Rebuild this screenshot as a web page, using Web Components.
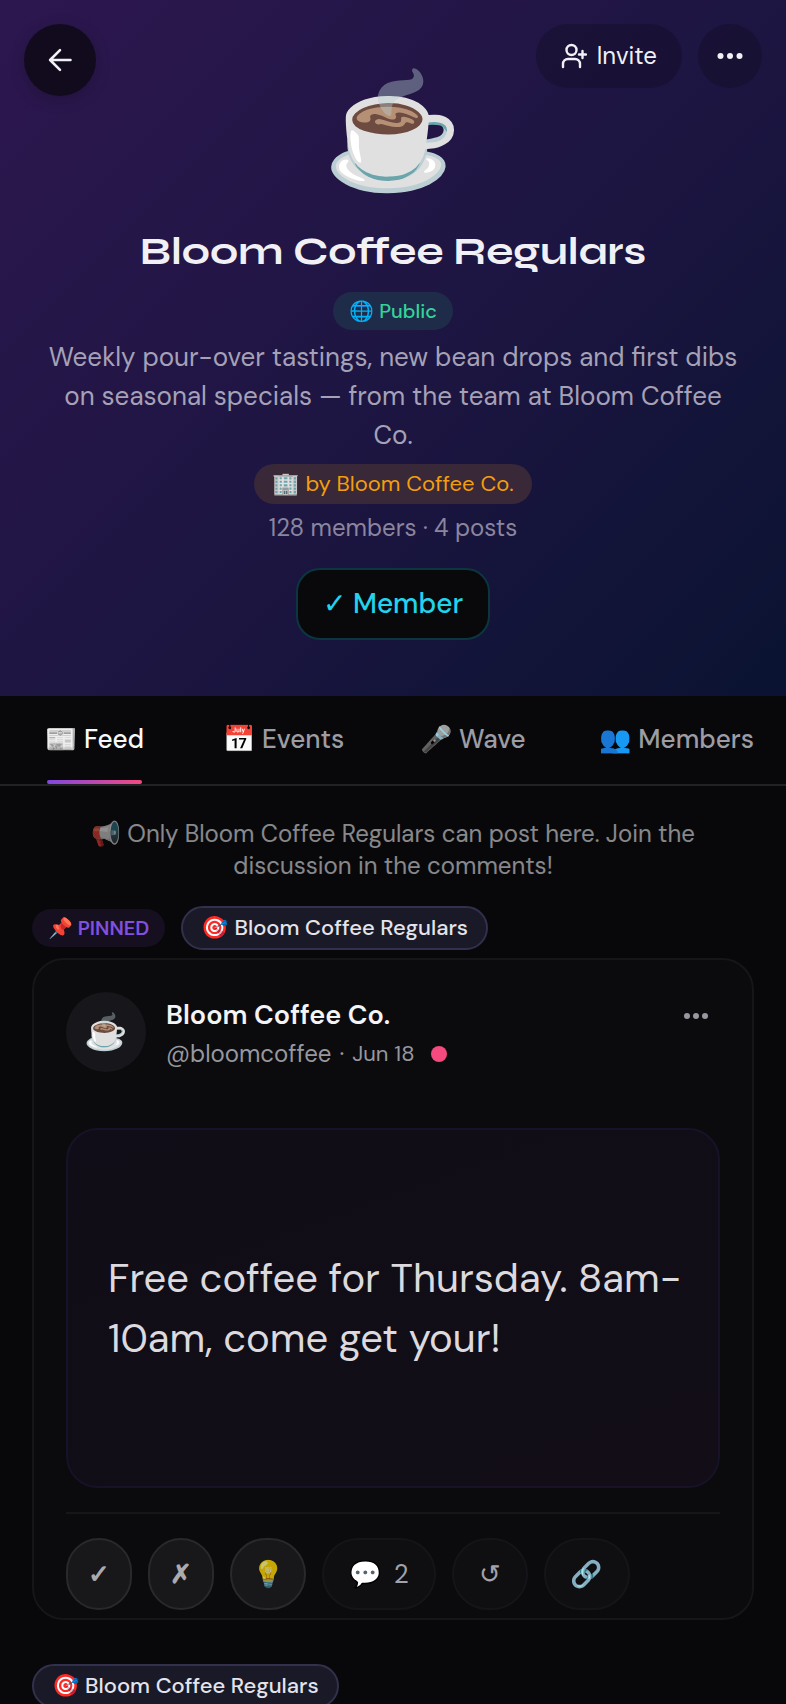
<!DOCTYPE html>
<html lang="en">
<head>
<meta charset="utf-8">
<meta name="viewport" content="width=device-width, initial-scale=1">
<title>Bloom Coffee Regulars</title>
<style>
  html { background: #08080a; scrollbar-width: none; }
  body {
    margin: 0;
    color: #f1f1f5;
    font-family: "DM Sans", "Noto Sans", "Noto Color Emoji", sans-serif;
    font-size: 24px;
    line-height: 32px;
  }
</style>
</head>
<body>
<community-page></community-page>

<template id="t-page">
  <style>
    :host { display: block; }
    main { padding: 32px 32px 0; display: flex; flex-direction: column; }
    .notice { margin: 0 0 24px; padding: 0 32px; text-align: center; opacity: .55; }
    .labels { display: flex; align-items: center; gap: 16px; margin-bottom: 8px; }
    feed-post { margin-bottom: 44px; }
  </style>
  <group-hero></group-hero>
  <tab-bar></tab-bar>
  <main>
    <p class="notice">📢 Only Bloom Coffee Regulars can post here. Join the discussion in the comments!</p>
    <div class="labels">
      <pill-label kind="pinned">📌 PINNED</pill-label>
      <pill-label kind="group">🎯 Bloom Coffee Regulars</pill-label>
    </div>
    <feed-post>
      <span slot="avatar">☕</span>
      <span slot="name">Bloom Coffee Co.</span>
      <span slot="handle">@bloomcoffee</span>
      <span slot="date">Jun 18</span>
      Free coffee for Thursday. 8am-<wbr>10am, come get your!
    </feed-post>
    <div class="labels">
      <pill-label kind="group">🎯 Bloom Coffee Regulars</pill-label>
    </div>
  </main>
</template>

<template id="t-hero">
  <style>
    :host {
      display: block;
      position: relative;
      background: linear-gradient(135deg, #2d174f 0%, #1c1541 55%, #0a1331 100%);
    }
    .bar {
      position: absolute; top: 24px; left: 24px; right: 24px;
      display: flex; align-items: flex-start; justify-content: space-between;
    }
    .right { display: flex; gap: 16px; }
    .content {
      display: flex; flex-direction: column; align-items: center;
      padding: 64px 48px 56px; text-align: center;
    }
    .emoji { font-size: 112px; line-height: 136px; }
    h1 {
      margin: 24px 0 14px;
      font: 700 40px/54px Syne, "DejaVu Sans", sans-serif;
    }
    .about { margin: 8px 0 9px; font-size: 26px; line-height: 39px; color: #a5a1b6; }
    .stats { margin: 8px 0 24px; color: #8a869f; }
  </style>
  <div class="bar">
    <round-button kind="back" label="Back">
      <svg width="28" height="28" viewBox="0 0 24 24" fill="none" stroke="currentColor" stroke-width="2.200" stroke-linecap="round" stroke-linejoin="round"><path d="M21 12H3.500M12 3.500L3.500 12l8.500 8.500"/></svg>
    </round-button>
    <div class="right">
      <round-button kind="text">
        <svg width="26" height="26" viewBox="0 0 26 26" fill="none" stroke="currentColor" stroke-width="2.400" stroke-linecap="round" stroke-linejoin="round"><circle cx="10.500" cy="7" r="5"/><path d="M2 24v-3a5 5 0 0 1 5-5h7a5 5 0 0 1 5 5v3M21.500 8v7M18 11.500h7"/></svg>
        Invite
      </round-button>
      <round-button label="More options">
        <svg width="28" height="28" viewBox="0 0 28 28" fill="currentColor"><circle cx="4.500" cy="14" r="3"/><circle cx="14" cy="14" r="3"/><circle cx="23.500" cy="14" r="3"/></svg>
      </round-button>
    </div>
  </div>
  <div class="content">
    <div class="emoji">☕</div>
    <h1>Bloom Coffee Regulars</h1>
    <pill-label kind="public">🌐 Public</pill-label>
    <p class="about">Weekly pour-over tastings, new bean drops and first dibs on seasonal specials — from the team at Bloom Coffee Co.</p>
    <pill-label kind="business">🏢 by Bloom Coffee Co.</pill-label>
    <p class="stats">128 members · 4 posts</p>
    <member-button>✓ Member</member-button>
  </div>
</template>

<template id="t-round">
  <style>
    :host { display: block; }
    button {
      box-sizing: border-box; min-width: 64px; height: 64px; padding: 0;
      display: flex; align-items: center; justify-content: center; gap: 10px;
      border: 0; border-radius: 32px; background: rgba(18, 10, 30, .36);
      color: #f1f1f5; font: inherit; cursor: pointer;
    }
    :host([kind="text"]) button { padding: 0 25px; }
    :host([kind="back"]) button {
      width: 72px; height: 72px; border-radius: 50%;
      background: #120b1e; box-shadow: 0 4px 16px rgba(0, 0, 0, .2);
    }
  </style>
  <button type="button"><slot></slot></button>
</template>

<template id="t-pill">
  <style>
    :host {
      box-sizing: border-box; display: inline-flex; align-items: center;
      height: 38px; border-radius: 22px; padding: 0 16px; white-space: pre;
      font-size: 20px; line-height: 24px;
    }
    :host([kind="public"]) { background: #1f2c49; color: #34d399; font-weight: 500; }
    :host([kind="business"]) { height: 40px; padding: 0 18px; background: #382838; color: #f59e0b; font-size: 22px; }
    :host([kind="pinned"]) { background: #150f1f; color: #8250e0; font-weight: 600; }
    :host([kind="group"]) {
      height: 44px; padding: 0 18px; border: 2px solid #32304c; background: #1a1927;
      color: #e4e4ec; font-size: 22px; font-weight: 500;
    }
  </style>
  <slot></slot>
</template>

<template id="t-member">
  <style>
    :host { display: block; }
    button {
      box-sizing: border-box; height: 72px; padding: 0 25px;
      border: 2px solid #0b3640; border-radius: 24px; background: #09090b;
      color: #22d3ee; font: inherit; font-size: 28px; font-weight: 500; cursor: pointer;
    }
  </style>
  <button type="button"><slot></slot></button>
</template>

<template id="t-tabs">
  <style>
    :host { display: block; border-bottom: 2px solid #222225; }
    nav { display: flex; }
    a {
      position: relative; flex: 1 0 0; padding: 27px 32px 29px; text-align: center;
      white-space: nowrap; text-decoration: none; color: #9c9ca4;
      font-size: 26px; font-weight: 500;
    }
    a[aria-current] { color: #f8f8fa; }
    a[aria-current]::after {
      content: ""; position: absolute; left: 25%; right: 25%; bottom: 0; height: 4px;
      border-radius: 2px; background: linear-gradient(90deg, #8048e0, #f24a80);
    }
  </style>
  <nav aria-label="Group sections">
    <a href="#feed" aria-current="page">📰 Feed</a>
    <a href="#events">📅 Events</a>
    <a href="#wave">🎤 Wave</a>
    <a href="#members">👥 Members</a>
  </nav>
</template>

<template id="t-post">
  <style>
    :host {
      display: block; padding: 32px 32px 8px; border: 2px solid #161619;
      border-radius: 32px; background: #0b0b0d;
    }
    header { display: flex; gap: 20px; margin-bottom: 54px; }
    .avatar {
      width: 80px; height: 80px; border-radius: 50%; background: #17171b;
      display: grid; place-items: center; font-size: 35px; line-height: 44px;
    }
    .who { flex: 1; padding-top: 4px; }
    .name { font-size: 27px; line-height: 38px; font-weight: 600; color: #f4f4f6; }
    .meta { display: flex; align-items: center; gap: 8px; line-height: 40px; color: #97979f; }
    .date { font-size: 22px; }
    .dot { width: 16px; height: 16px; border-radius: 50%; background: #f44a7d; margin-left: 8px; }
    .more {
      width: 48px; height: 48px; padding: 0; border: 0; background: none; color: #97979f;
      display: grid; place-items: center; cursor: pointer;
    }
    .body {
      box-sizing: border-box; min-height: 360px; padding: 32px 24px 32px 40px;
      display: flex; align-items: center;
      border: 2px solid #181228; border-radius: 32px;
      background: linear-gradient(160deg, #110d18, #120d16);
    }
    .body p { margin: 0; font-size: 40px; line-height: 60px; color: #dcdadf; }
    footer { display: flex; gap: 16px; margin-top: 24px; padding-top: 24px; border-top: 2px solid #161619; }
  </style>
  <header>
    <div class="avatar"><slot name="avatar"></slot></div>
    <div class="who">
      <div class="name"><slot name="name"></slot></div>
      <div class="meta"><slot name="handle"></slot><span>·</span><span class="date"><slot name="date"></slot></span><span class="dot"></span></div>
    </div>
    <button class="more" type="button" aria-label="Post options">
      <svg width="24" height="24" viewBox="0 0 24 24" fill="currentColor"><circle cx="3" cy="12" r="3"/><circle cx="12" cy="12" r="3"/><circle cx="21" cy="12" r="3"/></svg>
    </button>
  </header>
  <div class="body"><p><slot></slot></p></div>
  <footer>
    <action-button kind="vote">✓</action-button>
    <action-button kind="vote">✗</action-button>
    <action-button kind="vote">💡</action-button>
    <action-button>💬 <span>2</span></action-button>
    <action-button>↺</action-button>
    <action-button>🔗</action-button>
  </footer>
</template>

<template id="t-action">
  <style>
    :host { display: block; }
    button {
      box-sizing: border-box; height: 72px; padding: 0 25px;
      display: flex; align-items: center; gap: 12px;
      border: 2px solid #151519; border-radius: 36px; background: #0f0f12;
      color: #a2a2aa; font: inherit; font-size: 26px; cursor: pointer;
    }
    :host([kind="vote"]) button {
      border-color: #29292b; background: #18181a; color: rgba(220, 220, 224, .75);
      padding: 0 20px; font-weight: 700;
    }
  </style>
  <button type="button"><slot></slot></button>
</template>

<script>
  // Registers an element whose shadow root is cloned from a template.
  function define(tag, templateId, connected) {
    customElements.define(tag, class extends HTMLElement {
      constructor() {
        super();
        const root = this.attachShadow({ mode: 'open' });
        root.append(document.getElementById(templateId).content.cloneNode(true));
      }
      connectedCallback() { if (connected) connected(this, this.shadowRoot); }
    });
  }

  define('round-button', 't-round', (host, root) => {
    const label = host.getAttribute('label');
    if (label) root.querySelector('button').setAttribute('aria-label', label);
  });
  define('pill-label', 't-pill');
  define('member-button', 't-member');
  define('action-button', 't-action');
  define('tab-bar', 't-tabs');
  define('feed-post', 't-post');
  define('group-hero', 't-hero');
  define('community-page', 't-page');
</script>
</body>
</html>
